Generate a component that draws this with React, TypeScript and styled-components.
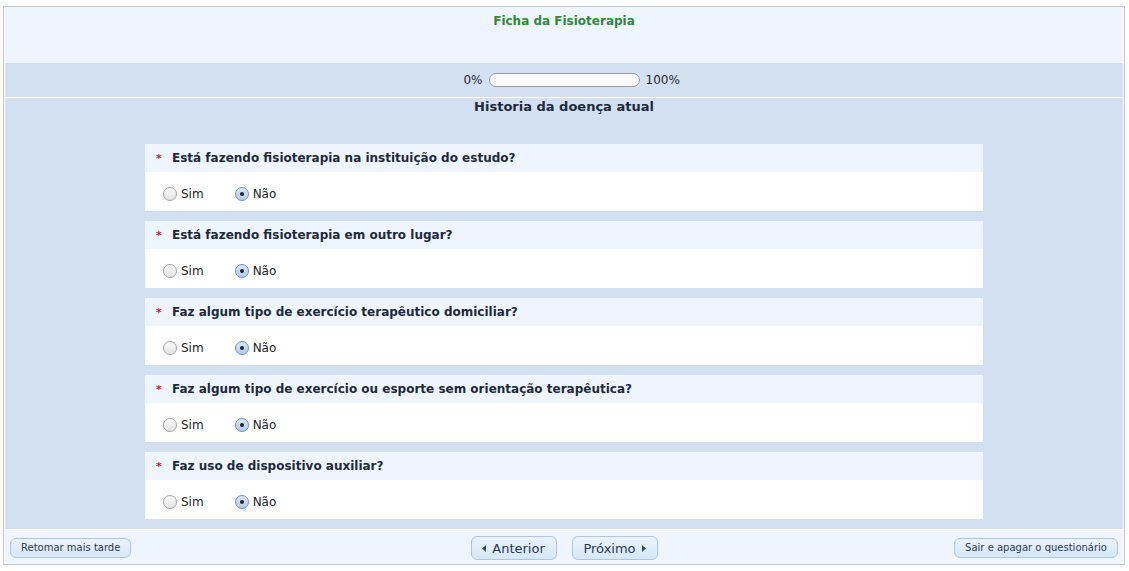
import styled, { createGlobalStyle } from "styled-components";

const GlobalStyle = createGlobalStyle`
	html, body {
		margin: 0;
		padding: 0;
		background: #ffffff;
		font-family: "DejaVu Sans", Verdana, sans-serif;
	}
`;

interface Question {
	text: string;
	answer: "sim" | "nao";
}

const questions: Question[] = [
	{ text: "Está fazendo fisioterapia na instituição do estudo?", answer: "nao" },
	{ text: "Está fazendo fisioterapia em outro lugar?", answer: "nao" },
	{ text: "Faz algum tipo de exercício terapêutico domiciliar?", answer: "nao" },
	{ text: "Faz algum tipo de exercício ou esporte sem orientação terapêutica?", answer: "nao" },
	{ text: "Faz uso de dispositivo auxiliar?", answer: "nao" },
];

export default function App() {
	return (
		<>
			<GlobalStyle />
			<Page>
				<Survey>
					<Header>
						<Title>Ficha da Fisioterapia</Title>
					</Header>
					<ProgressBand>
						<ProgressLabel align="right">0%</ProgressLabel>
						<ProgressTrack />
						<ProgressLabel align="left">100%</ProgressLabel>
					</ProgressBand>
					<Section>
						<SectionTitle>Historia da doença atual</SectionTitle>
						<QuestionList>
							{questions.map((q, i) => (
								<QuestionCard key={i}>
									<QuestionHeader>
										<Asterisk>*</Asterisk>
										{q.text}
									</QuestionHeader>
									<Answers>
										<Option>
											<Radio checked={q.answer === "sim"} />
											Sim
										</Option>
										<Option>
											<Radio checked={q.answer === "nao"} />
											Não
										</Option>
									</Answers>
								</QuestionCard>
							))}
						</QuestionList>
					</Section>
					<Footer>
						<FooterSide align="start">
							<SmallButton>Retomar mais tarde</SmallButton>
						</FooterSide>
						<NavGroup>
							<NavButton>
								<Arrow viewBox="0 0 4 7">
									<path d="M4 0 L0 3.5 L4 7 Z" />
								</Arrow>
								Anterior
							</NavButton>
							<NavButton>
								Próximo
								<Arrow viewBox="0 0 4 7">
									<path d="M0 0 L4 3.5 L0 7 Z" />
								</Arrow>
							</NavButton>
						</NavGroup>
						<FooterSide align="end">
							<SmallButton>Sair e apagar o questionário</SmallButton>
						</FooterSide>
					</Footer>
				</Survey>
			</Page>
		</>
	);
}

const Page = styled.div`
	padding: 6px 4px 6px 3px;
`;

const Survey = styled.div`
	border: 1px solid #c2c8cf;
	padding: 0 1px;
	background: #ffffff;
	display: flex;
	flex-direction: column;
	gap: 1px;
	box-sizing: border-box;
	height: 559px;
`;

const Header = styled.div`
	background: #eef5fe;
	height: 56px;
	text-align: center;
	padding-top: 7px;
	box-sizing: border-box;
`;

const Title = styled.div`
	color: #2f8a38;
	font-weight: bold;
	font-size: 12px;
`;

const ProgressBand = styled.div`
	background: #d3e0f1;
	height: 34px;
	margin-top: -1px;
	display: grid;
	grid-template-columns: 1fr auto 1fr;
	align-items: center;
	column-gap: 6px;
	font-size: 12px;
	color: #1f2937;
`;

const ProgressLabel = styled.span<{ align: "left" | "right" }>`
	text-align: ${({ align }) => align};
`;

const ProgressTrack = styled.div`
	width: 149px;
	height: 12px;
	border: 1px solid #9a9a9a;
	border-radius: 7px;
	background: #f7f9fc;
`;

const Section = styled.div`
	background: #d3e0f1;
	flex: 1;
	display: flex;
	flex-direction: column;
	align-items: center;
`;

const SectionTitle = styled.div`
	font-weight: bold;
	font-size: 13px;
	color: #1d2a3b;
	margin-top: 1px;
	height: 45px;
`;

const QuestionList = styled.div`
	display: flex;
	flex-direction: column;
	gap: 10px;
	width: 838px;
`;

const QuestionCard = styled.div`
	display: flex;
	flex-direction: column;
`;

const QuestionHeader = styled.div`
	background: #eef5fe;
	height: 28px;
	display: flex;
	align-items: center;
	padding-left: 11px;
	font-weight: bold;
	font-size: 12px;
	color: #1d2a3b;
`;

const Asterisk = styled.span`
	color: #d22222;
	width: 16px;
	font-size: 11px;
`;

const Answers = styled.div`
	background: #ffffff;
	height: 39px;
	box-sizing: border-box;
	display: flex;
	align-items: flex-start;
	padding: 15px 0 0 18px;
	gap: 31px;
`;

const Option = styled.label`
	display: flex;
	align-items: center;
	gap: 4px;
	font-size: 12px;
	color: #222;
`;

const Radio = styled.span<{ checked: boolean }>`
	position: relative;
	width: 12px;
	height: 12px;
	border-radius: 50%;
	border: 1px solid ${({ checked }) => (checked ? "#6d8fbf" : "#a3a3a3")};
	background: ${({ checked }) =>
		checked ? "linear-gradient(#dbe7f7, #b3cbec)" : "linear-gradient(#fbfbfb, #e3e3e3)"};

	&::after {
		content: "";
		display: ${({ checked }) => (checked ? "block" : "none")};
		position: absolute;
		left: 4px;
		top: 4px;
		width: 4px;
		height: 4px;
		border-radius: 50%;
		background: #1e2530;
	}
`;

const Footer = styled.div`
	background: #eef5fe;
	height: 34px;
	display: grid;
	grid-template-columns: 1fr auto 1fr;
	align-items: center;
	padding: 0 5px;
`;

const FooterSide = styled.div<{ align: "start" | "end" }>`
	display: flex;
	justify-content: ${({ align }) => (align === "start" ? "flex-start" : "flex-end")};
`;

const SmallButton = styled.button`
	font-family: "DejaVu Sans", Verdana, sans-serif;
	font-size: 10px;
	color: #2a3a4e;
	height: 20px;
	padding: 0 10px;
	border: 1px solid #a9c6e2;
	border-radius: 6px;
	background: linear-gradient(#eaf3fd, #d6e7f8);
	margin-top: 1px;
`;

const NavGroup = styled.div`
	display: flex;
	gap: 15px;
`;

const NavButton = styled.button`
	font-family: "DejaVu Sans", Verdana, sans-serif;
	font-size: 13px;
	color: #2a3a52;
	height: 24px;
	width: 86px;
	display: flex;
	align-items: center;
	justify-content: center;
	gap: 6px;
	border: 1px solid #a9c6e2;
	border-radius: 6px;
	background: linear-gradient(#eaf3fd, #d6e7f8);
	margin-top: 2px;
`;

const Arrow = styled.svg`
	width: 4px;
	height: 7px;
	fill: #2f4a6e;
`;
